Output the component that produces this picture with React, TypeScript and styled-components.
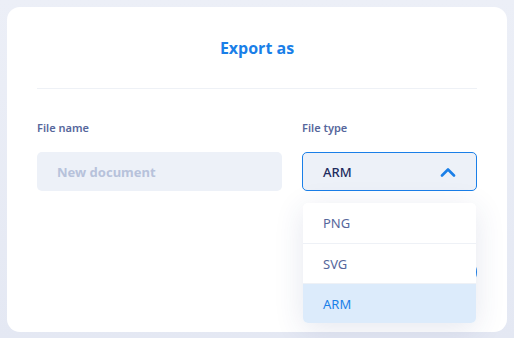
import React from "react";
import styled, { createGlobalStyle } from "styled-components";

const GlobalStyle = createGlobalStyle`
    html, body {
        margin: 0;
        padding: 0;
        background: #e7eaf4;
        font-family: "Noto Sans", "Open Sans", sans-serif;
    }
`;

const options = ["PNG", "SVG", "ARM"];

function ChevronUp() {
    return (
        <svg width="16" height="10" viewBox="0 0 16 10" fill="none">
            <path d="M2 8.5L8 2.5L14 8.5" stroke="#1a7fe8" strokeWidth="2.6" strokeLinecap="round" strokeLinejoin="round" />
        </svg>
    );
}

function App() {
    const selected = "ARM";
    return (
        <Page>
            <GlobalStyle />
            <Card>
                <Title>Export as</Title>
                <Divider />
                <Form>
                    <Field>
                        <Label>File name</Label>
                        <Input placeholder="New document" />
                    </Field>
                    <Field $narrow>
                        <Label>File type</Label>
                        <SelectBox>
                            <SelectValue>{selected}</SelectValue>
                            <ChevronUp />
                        </SelectBox>
                        <Menu>
                            {options.map((option) => (
                                <MenuItem key={option} $active={option === selected}>{option}</MenuItem>
                            ))}
                        </Menu>
                    </Field>
                </Form>
                <Footer>
                    <ExportButton>Export</ExportButton>
                </Footer>
            </Card>
        </Page>
    );
}

const Page = styled.div`
    width: 514px;
    height: 338px;
    padding: 7px;
    box-sizing: border-box;
    background: linear-gradient(180deg, #eceff7 0%, #e4e8f3 100%);
`;

const Card = styled.div`
    width: 500px;
    height: 325px;
    box-sizing: border-box;
    background: #ffffff;
    border-radius: 13px;
    padding: 0 30px;
    display: flex;
    flex-direction: column;
`;

const Title = styled.h1`
    margin: 0;
    padding-top: 30px;
    height: 51px;
    box-sizing: border-box;
    text-align: center;
    font-family: "Open Sans", sans-serif;
    font-size: 16px;
    font-weight: 700;
    color: #1a7fe8;
    line-height: 22px;
`;

const Divider = styled.div`
    height: 1px;
    margin-top: 30px;
    background: #eef1f6;
`;

const Form = styled.div`
    display: flex;
    gap: 20px;
    margin-top: 31px;
`;

const Field = styled.div<{ $narrow?: boolean }>`
    position: relative;
    display: flex;
    flex-direction: column;
    gap: 16px;
    width: ${({ $narrow }) => ($narrow ? "175px" : "245px")};
`;

const Label = styled.span`
    font-size: 11px;
    font-weight: 600;
    color: #56679c;
    line-height: 16px;
`;

const Input = styled.input`
    height: 39px;
    box-sizing: border-box;
    border: none;
    border-radius: 5px;
    background: #edf1f8;
    padding: 0 20px;
    font-family: "Noto Sans", sans-serif;
    font-size: 13px;
    font-weight: 700;
    color: #1d2c5e;

    &::placeholder {
        color: #b7c2db;
    }

    &:focus {
        outline: none;
    }
`;

const SelectBox = styled.div`
    height: 39px;
    box-sizing: border-box;
    border: 1px solid #1a7fe8;
    border-radius: 5px;
    background: #edf1f8;
    padding: 0 20px 0 20px;
    display: flex;
    align-items: center;
    justify-content: space-between;
`;

const SelectValue = styled.span`
    font-size: 13px;
    font-weight: 500;
    color: #1d2c5e;
`;

const Menu = styled.div`
    position: absolute;
    top: 83px;
    left: 1px;
    right: 1px;
    background: #ffffff;
    border-radius: 5px;
    overflow: hidden;
    box-shadow: 0 6px 30px rgba(40, 60, 120, 0.12);
    z-index: 2;
`;

const MenuItem = styled.div<{ $active?: boolean }>`
    height: 40px;
    box-sizing: border-box;
    display: flex;
    align-items: center;
    padding: 0 20px;
    font-size: 13px;
    color: ${({ $active }) => ($active ? "#1a7fe8" : "#56679c")};
    background: ${({ $active }) => ($active ? "#dcebfb" : "#ffffff")};
    border-top: 1px solid #eef1f6;

    &:first-child {
        border-top: none;
    }
`;

const Footer = styled.div`
    display: flex;
    justify-content: flex-end;
    margin-top: 66px;
`;

const ExportButton = styled.button`
    height: 30px;
    padding: 0 26px;
    border: none;
    border-radius: 15px;
    background: #1a7fe8;
    color: #ffffff;
    font-family: "Noto Sans", sans-serif;
    font-size: 13px;
    font-weight: 600;
`;

export default App;
